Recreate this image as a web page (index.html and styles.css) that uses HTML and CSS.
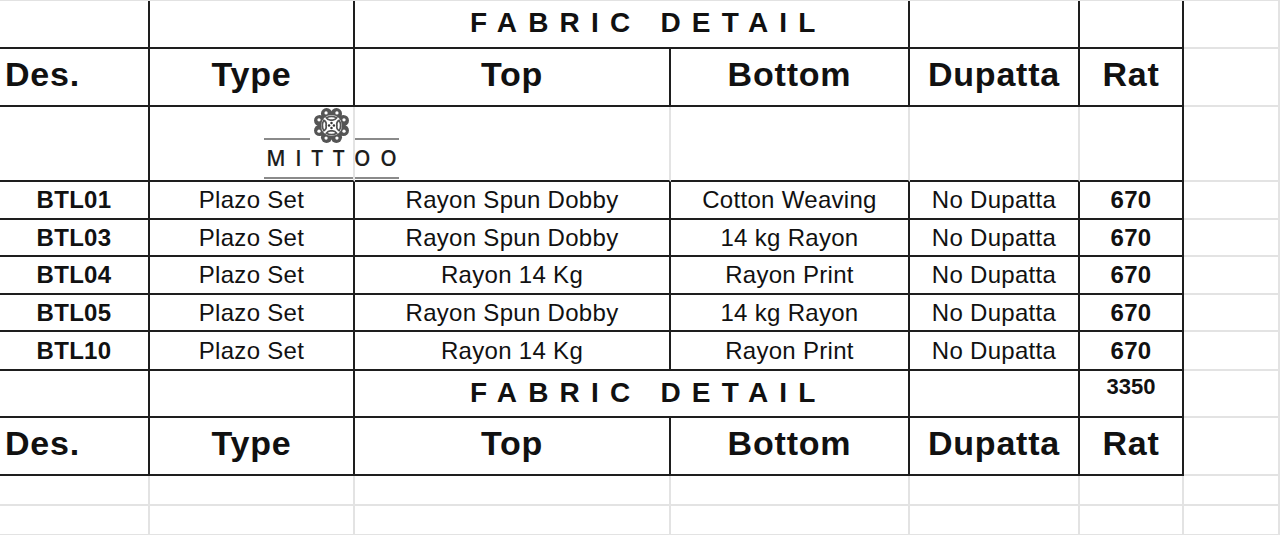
FILE: index.html
```html
<!DOCTYPE html>
<html>
<head>
<meta charset="utf-8">
<link rel="stylesheet" href="styles.css">
</head>
<body>
<div class="sheet">
  <div class="logo">
    <div class="logo-top">
      <span class="rule"></span>
      <svg class="emblem" viewBox="0 0 40 36" width="41" height="37">
        <g fill="#555">
          <circle cx="31.55" cy="22.79" r="5.5"/>
          <circle cx="24.79" cy="29.55" r="5.5"/>
          <circle cx="15.21" cy="29.55" r="5.5"/>
          <circle cx="8.45" cy="22.79" r="5.5"/>
          <circle cx="8.45" cy="13.21" r="5.5"/>
          <circle cx="15.21" cy="6.45" r="5.5"/>
          <circle cx="24.79" cy="6.45" r="5.5"/>
          <circle cx="31.55" cy="13.21" r="5.5"/>
        </g>
        <g fill="#fff">
          <circle cx="20" cy="18" r="10.2"/>
          <circle cx="32.2" cy="23.5" r="1.6"/>
          <circle cx="25.3" cy="30.3" r="1.6"/>
          <circle cx="14.7" cy="30.3" r="1.6"/>
          <circle cx="7.8" cy="23.5" r="1.6"/>
          <circle cx="7.8" cy="12.5" r="1.6"/>
          <circle cx="14.7" cy="5.7" r="1.6"/>
          <circle cx="25.3" cy="5.7" r="1.6"/>
          <circle cx="32.2" cy="12.5" r="1.6"/>
        </g>
        <g fill="none" stroke="#555" stroke-width="1.7" stroke-linecap="round">
          <path d="M15 10.5 q5 -3 10 0 q-2 3 -5 2.2 q-3 0.8 -5 -2.2z"/>
          <path d="M15 25.5 q5 3 10 0 q-2 -3 -5 -2.2 q-3 -0.8 -5 2.2z"/>
          <path d="M12.5 13 q-3 5 0 10 q3 -1.5 2.2 -5 q0.8 -3.5 -2.2 -5z"/>
          <path d="M27.5 13 q3 5 0 10 q-3 -1.5 -2.2 -5 q-0.8 -3.5 2.2 -5z"/>
        </g>
        <g fill="#333">
          <circle cx="20" cy="15.6" r="1.2"/>
          <circle cx="20" cy="20.4" r="1.2"/>
          <circle cx="17.6" cy="18" r="1.2"/>
          <circle cx="22.4" cy="18" r="1.2"/>
        </g>
      </svg>
      <span class="rule"></span>
    </div>
    <div class="logo-text">MITTOO</div>
    <span class="rule full"></span>
  </div>

  <!-- row 1 -->
  <div class="c dr db"></div>
  <div class="c dr db"></div>
  <div class="c dr db span3 title">FABRIC DETAIL</div>
  <div class="c dr db"></div>
  <div class="c dr db"></div>
  <div class="c g"></div>

  <!-- row 2 -->
  <div class="c dr db head left">Des.</div>
  <div class="c dr db head">Type</div>
  <div class="c dr db head">Top</div>
  <div class="c dr db head">Bottom</div>
  <div class="c dr db head">Dupatta</div>
  <div class="c dr db head">Rat</div>
  <div class="c g"></div>

  <!-- row 3 (logo row) -->
  <div class="c r3 k1 dr db"></div>
  <div class="c r3 k2 gr db"></div>
  <div class="c r3 k3 gr db"></div>
  <div class="c r3 k4 gr db"></div>
  <div class="c r3 k5 gr db"></div>
  <div class="c r3 k6 dr db"></div>
  <div class="c r3 k7 g"></div>

  <!-- data rows -->
  <div class="c dr db b">BTL01</div>
  <div class="c dr db">Plazo Set</div>
  <div class="c dr db">Rayon Spun Dobby</div>
  <div class="c dr db">Cotton Weaving</div>
  <div class="c dr db">No Dupatta</div>
  <div class="c dr db b">670</div>
  <div class="c g"></div>

  <div class="c dr db b">BTL03</div>
  <div class="c dr db">Plazo Set</div>
  <div class="c dr db">Rayon Spun Dobby</div>
  <div class="c dr db">14 kg Rayon</div>
  <div class="c dr db">No Dupatta</div>
  <div class="c dr db b">670</div>
  <div class="c g"></div>

  <div class="c dr db b">BTL04</div>
  <div class="c dr db">Plazo Set</div>
  <div class="c dr db">Rayon 14 Kg</div>
  <div class="c dr db">Rayon Print</div>
  <div class="c dr db">No Dupatta</div>
  <div class="c dr db b">670</div>
  <div class="c g"></div>

  <div class="c dr db b">BTL05</div>
  <div class="c dr db">Plazo Set</div>
  <div class="c dr db">Rayon Spun Dobby</div>
  <div class="c dr db">14 kg Rayon</div>
  <div class="c dr db">No Dupatta</div>
  <div class="c dr db b">670</div>
  <div class="c g"></div>

  <div class="c dr db b">BTL10</div>
  <div class="c dr db">Plazo Set</div>
  <div class="c dr db">Rayon 14 Kg</div>
  <div class="c dr db">Rayon Print</div>
  <div class="c dr db">No Dupatta</div>
  <div class="c dr db b">670</div>
  <div class="c g"></div>

  <!-- second title row -->
  <div class="c dr db"></div>
  <div class="c dr db"></div>
  <div class="c dr db span3 title">FABRIC DETAIL</div>
  <div class="c dr db"></div>
  <div class="c dr db total">3350</div>
  <div class="c g"></div>

  <!-- second header row -->
  <div class="c dr db head left">Des.</div>
  <div class="c dr db head">Type</div>
  <div class="c dr db head">Top</div>
  <div class="c dr db head">Bottom</div>
  <div class="c dr db head">Dupatta</div>
  <div class="c dr db head">Rat</div>
  <div class="c g"></div>

  <!-- empty grid rows -->
  <div class="c g"></div>
  <div class="c g"></div>
  <div class="c g"></div>
  <div class="c g"></div>
  <div class="c g"></div>
  <div class="c g"></div>
  <div class="c g"></div>

  <div class="c g"></div>
  <div class="c g"></div>
  <div class="c g"></div>
  <div class="c g"></div>
  <div class="c g"></div>
  <div class="c g"></div>
  <div class="c g"></div>
</div>
</body>
</html>
```

FILE: styles.css
```css
html, body {
  margin: 0;
  padding: 0;
  background: #fff;
}

.sheet {
  width: 1280px;
  height: 535px;
  overflow: hidden;
  box-sizing: border-box;
  border-top: 1px solid #e2e2e2;
  display: grid;
  grid-template-columns: 150px 205px 316px 239px 170px 104px 96px;
  grid-template-rows: 48px 58px 75px 38px 37px 38px 37px 39px 47px 58px 30px 30px;
  font-family: "Liberation Sans", Arial, sans-serif;
  color: #111;
}

.c {
  box-sizing: border-box;
  display: flex;
  align-items: center;
  justify-content: center;
  font-size: 24px;
  letter-spacing: 0.3px;
  white-space: nowrap;
  border-right: 2px solid #e3e3e3;
  border-bottom: 2px solid #e3e3e3;
}

.dr { border-right: 2px solid #1e1e1e; }
.db { border-bottom: 2px solid #1e1e1e; }
.gr { border-right: 2px solid #e3e3e3; }

.span3 { grid-column: span 2; }

.b { font-weight: bold; }

.title {
  font-weight: bold;
  font-size: 28px;
  letter-spacing: 11.2px;
  justify-content: flex-start;
  padding-left: 115px;
  padding-bottom: 2px;
}

.head {
  font-weight: bold;
  font-size: 34px;
  letter-spacing: 0.8px;
  padding-bottom: 6px;
}

.left {
  justify-content: flex-start;
  padding-left: 5px;
}

.total {
  font-weight: bold;
  font-size: 22px;
  letter-spacing: 0;
  align-items: flex-start;
  padding-top: 3px;
}

/* logo row: explicit placement */
.r3 { grid-row: 3; }
.k1 { grid-column: 1; }
.k2 { grid-column: 2; }
.k3 { grid-column: 3; }
.k4 { grid-column: 4; }
.k5 { grid-column: 5; }
.k6 { grid-column: 6; }
.k7 { grid-column: 7; }

.logo {
  grid-row: 3;
  grid-column: 2 / 4;
  align-self: start;
  justify-self: start;
  margin-left: 114px;
  margin-top: 0;
  width: 135px;
  display: flex;
  flex-direction: column;
  align-items: stretch;
}

.logo-top {
  display: flex;
  align-items: flex-end;
  height: 37px;
}

.logo-top .rule {
  flex: 1;
  margin-bottom: 4px;
}

.emblem {
  display: block;
  flex: none;
  margin: 0 1px;
}

.rule {
  display: block;
  height: 2px;
  background: #8a8a8a;
}

.logo-text {
  font-family: "Open Sans", "DejaVu Sans", sans-serif;
  font-size: 21px;
  font-weight: 600;
  letter-spacing: 9.6px;
  margin-right: -9.6px;
  color: #1e1e1e;
  text-align: center;
  line-height: 22px;
  margin-top: 3px;
}

.rule.full {
  margin-top: 8px;
}
```
